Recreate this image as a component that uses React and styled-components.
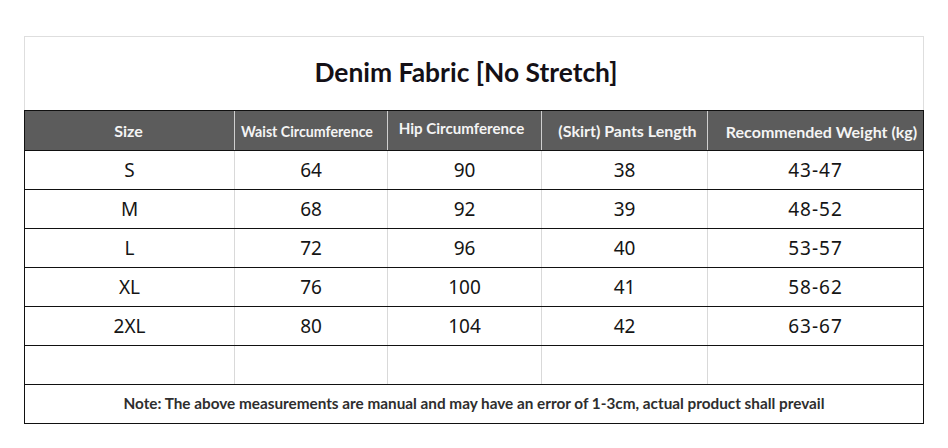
import React from "react";
import styled, { createGlobalStyle } from "styled-components";

const columns = [
  { label: "Size", size: 16, dy: 0, dx: -1 },
  { label: "Waist Circumference", size: 14.2, dy: 1, dx: -4 },
  { label: "Hip Circumference", size: 15.1, dy: -3, dx: -3 },
  { label: "(Skirt) Pants Length", size: 16, dy: 0, dx: 3 },
  { label: "Recommended Weight (kg)", size: 16, dy: 1, dx: 6 },
];

const rows = [
  ["S", "64", "90", "38", "43-47"],
  ["M", "68", "92", "39", "48-52"],
  ["L", "72", "96", "40", "53-57"],
  ["XL", "76", "100", "41", "58-62"],
  ["2XL", "80", "104", "42", "63-67"],
  ["", "", "", "", ""],
];

export default function App() {
  return (
    <>
      <GlobalStyle />
      <Page>
        <Sheet>
          <Title>Denim Fabric [No Stretch]</Title>
          <Table>
            <HeaderRow>
              {columns.map((c) => (
                <HeadCell key={c.label} $size={c.size} $dy={c.dy} $dx={c.dx}>
                  {c.label}
                </HeadCell>
              ))}
            </HeaderRow>
            {rows.map((r, i) => (
              <Row key={i}>
                {r.map((v, j) => (
                  <Cell key={j} $range={j === 4}>
                    {v}
                  </Cell>
                ))}
              </Row>
            ))}
            <Note>
              Note: The above measurements are manual and may have an error of 1-3cm, actual product shall prevail
            </Note>
          </Table>
        </Sheet>
      </Page>
    </>
  );
}

/* ----------------------------- STYLED COMPONENTS ----------------------------- */

const GlobalStyle = createGlobalStyle`
  html, body {
    margin: 0;
    padding: 0;
    background: #ffffff;
  }
`;

const Page = styled.div`
  width: 948px;
  height: 448px;
  padding: 36px 0 0 24px;
  box-sizing: border-box;
  background: #ffffff;
`;

const Sheet = styled.div`
  width: 900px;
  display: flex;
  flex-direction: column;
`;

const Title = styled.div`
  height: 70px;
  padding-bottom: 3px;
  padding-right: 16px;
  border: 1px solid #dedede;
  border-bottom: none;
  display: flex;
  align-items: center;
  justify-content: center;
  font-family: Lato, "Liberation Sans", sans-serif;
  font-weight: 700;
  font-size: 26.4px;
  color: #141016;
`;

const Table = styled.div`
  border: 1px solid #111;
  display: flex;
  flex-direction: column;
`;

const grid = `
  display: grid;
  grid-template-columns: 210px 153px 154px 166px 215px;
`;

const HeaderRow = styled.div`
  ${grid}
  height: 39px;
  background: #5c5c5c;
  border-bottom: 1px solid #111;
`;

const HeadCell = styled.div`
  display: flex;
  align-items: center;
  justify-content: center;
  border-right: 1px solid #cfcfcf;
  font-family: Lato, "Liberation Sans", sans-serif;
  font-weight: 700;
  font-size: ${(p) => p.$size}px;
  color: #f4f4f4;
  white-space: nowrap;
  padding-top: ${(p) => Math.max(p.$dy, 0) * 2}px;
  padding-bottom: ${(p) => Math.max(-p.$dy, 0) * 2}px;
  padding-left: ${(p) => Math.max(p.$dx, 0) * 2}px;
  padding-right: ${(p) => Math.max(-p.$dx, 0) * 2}px;

  &:last-child {
    border-right: none;
  }
`;

const Row = styled.div`
  ${grid}
  height: 38px;
  border-bottom: 1px solid #111;
`;

const Cell = styled.div`
  display: flex;
  align-items: center;
  justify-content: center;
  border-right: 1px solid #d9d9d9;
  font-family: "Noto Sans", "Open Sans", sans-serif;
  font-size: 19px;
  letter-spacing: ${(p) => (p.$range ? "1px" : "0")};
  color: #151515;
  padding-bottom: 1px;

  &:last-child {
    border-right: none;
  }
`;

const Note = styled.div`
  height: 36px;
  padding-bottom: 2px;
  display: flex;
  align-items: center;
  justify-content: center;
  font-family: Lato, "Liberation Sans", sans-serif;
  font-weight: 700;
  font-size: 15.3px;
  color: #2e2e2e;
`;
